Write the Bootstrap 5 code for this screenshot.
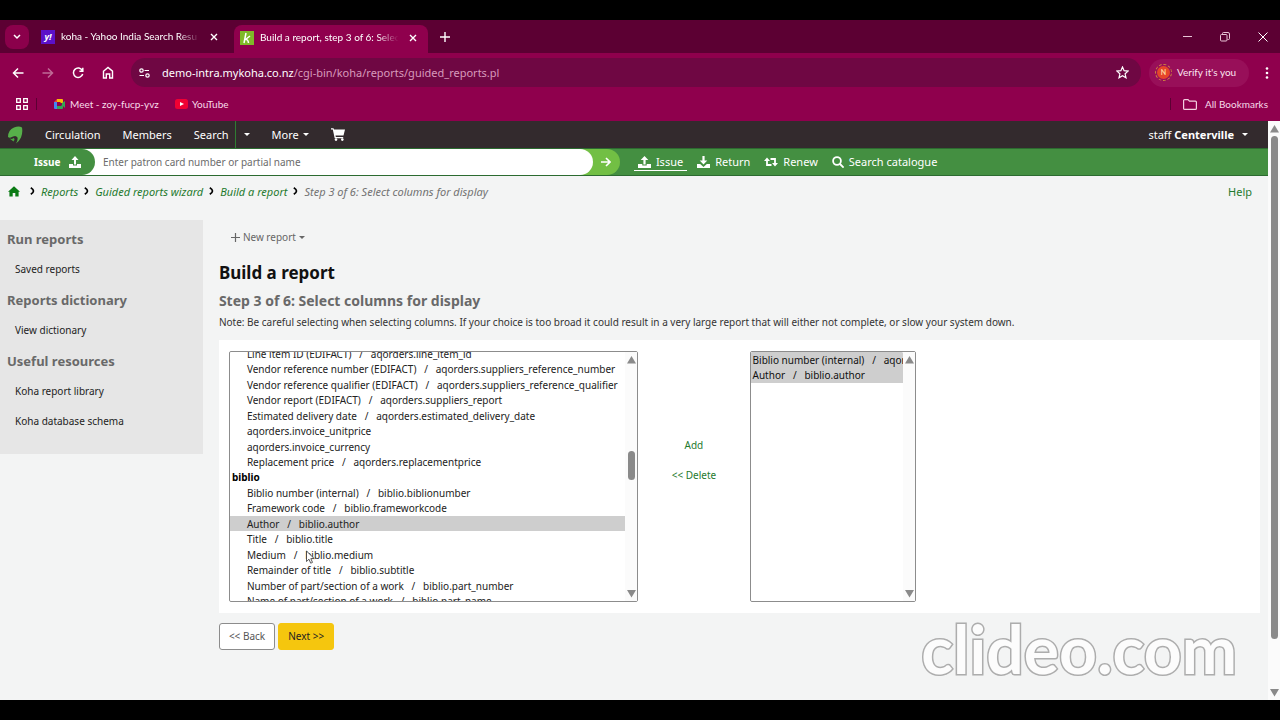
<!DOCTYPE html>
<html lang="en">
<head>
<meta charset="utf-8">
<meta name="viewport" content="width=device-width, initial-scale=1">
<title>Build a report, step 3 of 6: Select columns for display</title>
<link rel="stylesheet" href="https://cdn.jsdelivr.net/npm/bootstrap@5.3.0/dist/css/bootstrap.min.css">
<style>
body{background:#000;font-family:"Noto Sans",sans-serif;font-size:10px;line-height:15px;color:#333;min-height:100vh;padding:20px 0}
a{color:inherit;text-decoration:none}
svg{display:block;flex:none}
button{border:0;background:none;color:inherit;padding:0}

/* browser frame */
.frame-ui{font-family:Lato,sans-serif;color:#f7dcea}
.tabstrip{background:#5c0033;height:33px}
.tab-menu{width:24px;height:24px;border-radius:8px;background:#8b004b;display:grid;place-items:center;margin-left:5px}
.tab-item{height:33px;gap:6px}
.tab-item .tab-name{width:143px;overflow:hidden;white-space:nowrap;color:#fff;-webkit-mask-image:linear-gradient(90deg,#000 82%,transparent 97%)}
.tab-on{background:#8f004d;border-radius:8px 8px 0 0;width:194px;height:28px;padding:0 8px 3px 6px}
.favi{width:14px;height:14px;display:grid;place-items:center;color:#fff;font:italic 700 9px/14px "Open Sans",sans-serif}
.favi.yahoo{background:#5b11c9}
.favi.koha{background:#7fb928}
.toolbar-row{background:#8f004d;height:38px;padding:1px 11px 0 12px}
.nav-tools{gap:18px}
.omni{background:#6f0743;border-radius:14px;height:29px;margin-left:17px;color:#d79abb;font:11px/15px "Noto Sans",sans-serif}
.omni b{font-weight:400;color:#fff}
.chip{background:#980f59;border-radius:14px;height:28px;width:100px;gap:7px;color:#fbe6f0}
.chip i{width:13px;height:13px;border-radius:50%;background:#e5452a;outline:1px dashed #d08a3c;outline-offset:1px;font:700 7px/13px Lato,sans-serif;text-align:center;color:#ffd9a0}
.bookmarks{background:#8f004d;height:30px;padding-bottom:4px}
.rule-v{width:1px;height:12px;background:#5c0033}

/* staff client header */
.koha-bar{background:#332a2d;height:27px;color:#fff;font-size:11px}
.koha-bar .menu-link{margin-left:22px}
.koha-bar .split{border-left:1px solid #2f7d32;height:27px;margin-left:6px}
.tri{width:0;height:0;border:3px solid transparent;border-top-color:currentColor;border-bottom:0}
.search-bar{background:#448f41;height:28px;border:1px solid #2c6b30;border-width:1px 0;color:#fff;font-size:11px}
.issue-cap{position:relative;z-index:1;width:95px;height:26px;padding-left:34px;gap:9px;font-size:10px;font-weight:700;background:#448f41;border-radius:0 13px 13px 0}
.search-field{flex:0 0 42.5%;margin-left:-14px;background:#72bf44;border-radius:0 13px 13px 0;height:26px}
.search-bar input{border:0;border-radius:0 13px 13px 0;width:100%;height:26px;padding:0 8px 0 22px;font-size:10px;background:#fff;outline:0}
.search-bar input::placeholder{color:#6b6b6b;opacity:1}
.search-bar .go{width:27px;display:grid;place-items:center}
.acts{gap:6px;margin-left:14px}
.act{height:18px;padding:0 4px;gap:5px;border-bottom:1px solid transparent}
.act.on{border-color:#fff}

/* page */
.page-bg{background:#f3f4f4}
.crumbs{font-style:italic;font-size:11px;color:#727272;height:30px;gap:6px;padding-left:8px}
.crumbs a,.grn{color:#1f7a2e}
.side{width:16%;background:#e6e6e6;padding:11px 7px 25px}
.side h2{font-size:13px;line-height:17px;font-weight:700;color:#696969;margin:0}
.side a{display:block;color:#222;padding:0 8px;margin:14px 0 15px}
.side a+a,.side a:last-child{margin:13px 0 0}
.main-col{padding:10px 8px 0 16px}
.new-btn{gap:3px;color:#666}
.main-col h1{font-size:17px;line-height:20px;font-weight:700;color:#111;margin:18px 0 10px}
.main-col h3{font-size:14px;line-height:16px;font-weight:700;color:#696969;margin:0 0 6px}
.main-col p{margin:0 0 10px}
.panel{background:#fff;padding:11px 10px;display:grid;grid-template-columns:81fr 22fr 33fr 66fr}
.listbox{border:1px solid #8c8c8c;border-radius:2px;display:flex;position:relative;min-width:0}
.listbox select{flex:1 1 0;min-width:0;border:0;padding:0;height:249px;background:#fff;font-size:10px;outline:0;scrollbar-width:none;color:#222}
.listbox select::-webkit-scrollbar{display:none}
.listbox option{padding:1px 2px 0}
.listbox option:nth-child(even){padding-bottom:1px}
.listbox optgroup{padding:0;font-weight:700;color:#000}
.listbox optgroup option{padding-left:17px;font-weight:400;color:#222}
.listbox option:checked{background:#cecece linear-gradient(#cecece,#cecece)}
.swap{gap:15px;padding-bottom:32px}
.sbar{flex:none;width:12px;background:#fbfbfb;display:flex;flex-direction:column;align-items:center;padding:4px 0 3px}
.sbar .thumb{width:7px;border-radius:4px;background:#8a8a8a}
.thumb.in-list{height:29px;margin-top:87px}
.thumb.in-page{height:88%;margin-top:3px}
.pointer{position:absolute;left:75px;top:198px}
.foot-row{gap:3px;padding-top:10px}
.foot-btn{height:27px;padding:0 9px;border-radius:3px;border:1px solid #8c8c8c;background:#fff;color:#555}
.foot-btn.go-next{background:#f5c60e;border-color:#f5c60e;color:#222}
.stamp{position:absolute;right:31px;bottom:11px;font:700 66px/80px Lato,sans-serif;color:#fcfcfc;-webkit-text-stroke:3px #adadad;paint-order:stroke fill}
</style>
</head>
<body class="d-flex flex-column">

<header class="frame-ui">
  <div class="tabstrip d-flex align-items-center">
    <button class="tab-menu" aria-label="Search tabs"><svg width="8" height="6" fill="none" stroke="#fff" stroke-width="1.5"><path d="M1 1l3 3 3-3"/></svg></button>
    <div class="tab-item d-flex align-items-center ms-2 ps-1">
      <span class="favi yahoo">y!</span><span class="tab-name">koha - Yahoo India Search Resu</span>
      <button aria-label="Close tab"><svg width="8" height="8" stroke="#fff" stroke-width="1.4"><path d="M1 1l6 6M7 1l-6 6"/></svg></button>
    </div>
    <div class="tab-on tab-item d-flex align-items-center align-self-end ms-3">
      <span class="favi koha"><svg width="14" height="14" fill="none" stroke="#fff" stroke-width="1.5"><path d="M6 2L4 12M10 5L5.500 8.500Q8 8 8.500 12"/></svg></span><span class="tab-name">Build a report, step 3 of 6: Selec</span>
      <button aria-label="Close tab"><svg width="8" height="8" stroke="#fff" stroke-width="1.4"><path d="M1 1l6 6M7 1l-6 6"/></svg></button>
    </div>
    <button class="ms-2 ps-1" aria-label="New tab"><svg width="10" height="10" stroke="#fff" stroke-width="1.4"><path d="M5 0v10M0 5h10"/></svg></button>
    <div class="ms-auto d-flex align-items-center gap-4 pe-2 me-1">
      <button class="pe-1" aria-label="Minimise"><svg width="9" height="9" stroke="#e8c4d6"><path d="M0 4.500h9"/></svg></button>
      <button aria-label="Restore"><svg width="10" height="10" fill="none" stroke="#e8c4d6"><rect x=".5" y="2.500" width="6.500" height="6.500" rx="1"/><path d="M2.500 2.500v-1q0-1 1-1h4.500q1.500 0 1.500 1.500v4.500q0 1-1 1h-1"/></svg></button>
      <button class="ps-1" aria-label="Close"><svg width="10" height="10" stroke="#fff"><path d="M.5.5l9 9M9.500.5l-9 9"/></svg></button>
    </div>
  </div>

  <div class="toolbar-row d-flex align-items-center">
    <nav class="nav-tools d-flex align-items-center">
      <button aria-label="Back"><svg width="12" height="12" fill="none" stroke="#fff" stroke-width="1.5"><path d="M11.500 6H2M6 1.500L1.500 6 6 10.500"/></svg></button>
      <button aria-label="Forward"><svg width="12" height="12" fill="none" stroke="#c06a96" stroke-width="1.5"><path d="M.5 6H10M6 1.500L10.500 6 6 10.500"/></svg></button>
      <button aria-label="Reload"><svg width="12" height="12" fill="none" stroke="#fff" stroke-width="1.5"><path d="M10.300 3.500A4.700 4.700 0 1 0 10.700 7M10.800.8v3.400H7.400"/></svg></button>
      <button aria-label="Home"><svg width="12" height="13" fill="none" stroke="#fff" stroke-width="1.4"><path d="M1.500 5.200L6 1.500l4.500 3.700V12H7.700V8H4.300v4H1.500z"/></svg></button>
    </nav>
    <div class="omni flex-grow-1 d-flex align-items-center px-2">
      <svg width="11" height="10" fill="none" stroke="#fff" stroke-width="1.2"><circle cx="2.500" cy="2.500" r="1.700"/><path d="M5.500 2.500H10M.5 7.500H5"/><circle cx="8.500" cy="7.500" r="1.700"/></svg>
      <span class="ms-2 ps-1"><b>demo-intra.mykoha.co.nz</b>/cgi-bin/koha/reports/guided_reports.pl</span>
      <button class="ms-auto me-1" aria-label="Bookmark"><svg width="13" height="13" fill="none" stroke="#fff" stroke-width="1.2"><path d="M6.500 1l1.600 3.700 4 .4-3 2.700.9 4-3.500-2.100L3 11.800l.9-4-3-2.700 4-.4z"/></svg></button>
    </div>
    <button class="chip d-flex align-items-center ms-2 ps-2"><i>N</i>Verify it's you</button>
    <button class="ms-3" aria-label="Menu"><svg width="4" height="12" fill="#fff"><circle cx="2" cy="1.500" r="1.300"/><circle cx="2" cy="6" r="1.300"/><circle cx="2" cy="10.500" r="1.300"/></svg></button>
  </div>

  <nav class="bookmarks d-flex align-items-center">
    <button class="ms-3" aria-label="Apps"><svg width="12" height="12" fill="none" stroke="#fff" stroke-width="1.3"><path d="M.7.7h3.600v3.600H.7zM7.700.7h3.600v3.600H7.700zM.7 7.700h3.600v3.600H.7zM7.700 7.700h3.600v3.600H7.700z"/></svg></button>
    <span class="rule-v ms-2 me-2 border-start-0"></span>
    <a href="#" class="d-flex align-items-center gap-1 ms-2"><svg width="13" height="12"><path fill="#4285f4" d="M1 4h3v7H2q-1 0-1-1z"/><path fill="#ea4335" d="M1 4l3-3v3z"/><path fill="#fbbc04" d="M4 1h5q1 0 1 1v3H7V4H4z"/><path fill="#34a853" d="M4 8h4l2-2v4q0 1-1 1H4zM9 5l3-2v7L9 7z"/><path fill="#8f004d" d="M4 4h3.500v4H4z"/></svg>Meet - zoy-fucp-yvz</a>
    <a href="#" class="d-flex align-items-center gap-1 ms-3"><svg width="13" height="10"><rect width="13" height="10" rx="2.500" fill="#f00033"/><path fill="#fff" d="M5 3l4 2-4 2z"/></svg>YouTube</a>
    <span class="rule-v ms-auto me-2"></span>
    <a href="#" class="d-flex align-items-center gap-2 ms-1 pe-2 me-1"><svg width="14" height="11" fill="none" stroke="#f3cfe0" stroke-width="1.2"><path d="M.6 1.600q0-1 1-1H5l1.500 1.500h5.900q1 0 1 1v6.300q0 1-1 1H1.600q-1 0-1-1z"/></svg>All Bookmarks</a>
  </nav>
</header>

<div class="d-flex flex-grow-1 page-bg">
  <div class="flex-grow-1 position-relative overflow-hidden">
    <nav class="koha-bar d-flex align-items-center">
      <a href="#" class="ms-2" aria-label="Koha home"><svg width="15" height="18"><path fill="#57b04a" d="M0 11Q0 4 6 1.500q5-2 8 0 1 5-1 10-2 4-5 6 2-3 1.500-6-1.500-2.500-4.500-1-3 2-5 .5z"/><path fill="#4aa53f" d="M1.500 12.500q2.500 1 4-.500 2 1 0 3.500z"/></svg></a>
      <a href="#" class="menu-link">Circulation</a>
      <a href="#" class="menu-link">Members</a>
      <a href="#" class="menu-link">Search</a>
      <a href="#" class="split d-flex align-items-center ps-2" aria-label="Search options"><span class="tri"></span></a>
      <a href="#" class="menu-link d-flex align-items-center">More<span class="tri ms-1"></span></a>
      <a href="#" class="menu-link" aria-label="Cart"><svg width="14" height="13" fill="#fff"><path d="M0 .3h2.500l.5 1.300h11L12.500 7.600H4.500l.3 1.300h7.400v1.300H3.700L1.800 1.600H0z"/><circle cx="5" cy="11.600" r="1.300"/><circle cx="11.300" cy="11.600" r="1.300"/></svg></a>
      <a href="#" class="ms-auto d-flex align-items-center pe-3 me-1"><span>staff <b>Centerville</b></span><span class="tri ms-2"></span></a>
    </nav>
    <form class="search-bar d-flex align-items-center">
      <label for="patron" class="issue-cap d-flex align-items-center">Issue <svg width="12" height="12" fill="#fff"><path d="M6 0l3.500 4H7v4.500H5V4H2.500zM0 8h4v1.500h4V8h4v4H0z"/></svg></label>
      <div class="search-field d-flex">
        <div class="flex-grow-1"><input id="patron" type="text" placeholder="Enter patron card number or partial name"></div>
        <button class="go" type="button" aria-label="Submit"><svg width="10" height="10" fill="none" stroke="#fff" stroke-width="1.6"><path d="M0 5h9M5 1l4 4-4 4"/></svg></button>
      </div>
      <div class="acts d-flex align-items-center">
        <a href="#" class="act on d-flex align-items-center"><svg width="13" height="12" fill="#fff"><path d="M6.500 0l3.800 4H7.600v4.500H5.400V4H2.700zM0 8h4.300v1.500h4.400V8H13v4H0z"/></svg>Issue</a>
        <a href="#" class="act d-flex align-items-center"><svg width="13" height="12" fill="#fff"><path d="M6.500 8.500L2.700 4.500h2.700V0h2.200v4.500h2.700zM0 8h3.200l3.300 3 3.300-3H13v4H0z"/></svg>Return</a>
        <a href="#" class="act d-flex align-items-center"><svg width="14" height="10" fill="none" stroke="#fff" stroke-width="1.8"><path d="M3 2.500V8H7.500M11 7.500V2H6.500"/><path fill="#fff" stroke="none" d="M0 4L3 .5 6 4zM8 6l3 3.500L14 6z"/></svg>Renew</a>
        <a href="#" class="act d-flex align-items-center"><svg width="12" height="12" fill="none" stroke="#fff" stroke-width="1.8"><circle cx="5" cy="5" r="3.900"/><path d="M8 8l3.600 3.600"/></svg>Search catalogue</a>
      </div>
    </form>

    <nav class="crumbs d-flex align-items-center" aria-label="Breadcrumb">
      <a href="#" aria-label="Home"><svg width="12" height="11" fill="#0a7a14"><path d="M6 .3L12 5.800h-1.400V10.500H7.300V7H4.700v3.500H1.400V5.800H0z"/></svg></a>
      <svg class="ms-1" width="5" height="8" fill="none" stroke="#000" stroke-width="1.7"><path d="M.8.8Q3.500 2.500 3.500 4T.8 7.200"/></svg>
      <a href="#">Reports</a>
      <svg width="5" height="8" fill="none" stroke="#000" stroke-width="1.7"><path d="M.8.8Q3.500 2.500 3.500 4T.8 7.200"/></svg>
      <a href="#">Guided reports wizard</a>
      <svg width="5" height="8" fill="none" stroke="#000" stroke-width="1.7"><path d="M.8.8Q3.500 2.500 3.500 4T.8 7.200"/></svg>
      <a href="#">Build a report</a>
      <svg width="5" height="8" fill="none" stroke="#000" stroke-width="1.7"><path d="M.8.8Q3.500 2.500 3.500 4T.8 7.200"/></svg>
      <span>Step 3 of 6: Select columns for display</span>
      <a href="#" class="ms-auto me-3 fst-normal">Help</a>
    </nav>

    <div class="d-flex align-items-start" style="padding-top:14px">
      <aside class="side flex-shrink-0">
        <h2>Run reports</h2>
        <a href="#">Saved reports</a>
        <h2>Reports dictionary</h2>
        <a href="#">View dictionary</a>
        <h2>Useful resources</h2>
        <a href="#">Koha report library</a>
        <a href="#">Koha database schema</a>
      </aside>
      <main class="main-col flex-grow-1">
        <button class="new-btn d-flex align-items-center ms-2 ps-1"><svg width="9" height="9" stroke="#666" stroke-width="1.2"><path d="M4.500 0v9M0 4.500h9"/></svg>New report<span class="tri"></span></button>
        <h1>Build a report</h1>
        <h3>Step 3 of 6: Select columns for display</h3>
        <p>Note: Be careful selecting when selecting columns. If your choice is too broad it could result in a very large report that will either not complete, or slow your system down.</p>
        <form>
          <div class="panel">
            <div class="listbox">
              <select id="available" multiple aria-label="Available columns">
                <optgroup label="aqorders">
                  <option>Line item ID (EDIFACT)&nbsp;&nbsp; / &nbsp;&nbsp;aqorders.line_item_id</option>
                  <option>Vendor reference number (EDIFACT)&nbsp;&nbsp; / &nbsp;&nbsp;aqorders.suppliers_reference_number</option>
                  <option>Vendor reference qualifier (EDIFACT)&nbsp;&nbsp; / &nbsp;&nbsp;aqorders.suppliers_reference_qualifier</option>
                  <option>Vendor report (EDIFACT)&nbsp;&nbsp; / &nbsp;&nbsp;aqorders.suppliers_report</option>
                  <option>Estimated delivery date&nbsp;&nbsp; / &nbsp;&nbsp;aqorders.estimated_delivery_date</option>
                  <option>aqorders.invoice_unitprice</option>
                  <option>aqorders.invoice_currency</option>
                  <option>Replacement price&nbsp;&nbsp; / &nbsp;&nbsp;aqorders.replacementprice</option>
                </optgroup>
                <optgroup label="biblio">
                  <option>Biblio number (internal)&nbsp;&nbsp; / &nbsp;&nbsp;biblio.biblionumber</option>
                  <option>Framework code&nbsp;&nbsp; / &nbsp;&nbsp;biblio.frameworkcode</option>
                  <option selected>Author&nbsp;&nbsp; / &nbsp;&nbsp;biblio.author</option>
                  <option>Title&nbsp;&nbsp; / &nbsp;&nbsp;biblio.title</option>
                  <option>Medium&nbsp;&nbsp; / &nbsp;&nbsp;biblio.medium</option>
                  <option>Remainder of title&nbsp;&nbsp; / &nbsp;&nbsp;biblio.subtitle</option>
                  <option>Number of part/section of a work&nbsp;&nbsp; / &nbsp;&nbsp;biblio.part_number</option>
                  <option>Name of part/section of a work&nbsp;&nbsp; / &nbsp;&nbsp;biblio.part_name</option>
                </optgroup>
              </select>
              <div class="sbar">
                <svg width="9" height="8" fill="#8a8a8a"><path d="M4.500 0L9 7.500H0z"/></svg>
                <span class="thumb in-list"></span>
                <svg class="mt-auto" width="9" height="8" fill="#8a8a8a"><path d="M4.500 7.500L9 0H0z"/></svg>
              </div>
              <svg class="pointer" width="12" height="16" fill="#fff" stroke="#333" stroke-width=".8"><path d="M1.500 1v10.500l2.500-2.300 1.700 4 1.800-.8-1.700-3.800h3.400z"/></svg>
            </div>
            <div class="swap grn d-flex flex-column align-items-center justify-content-center">
              <button type="button">Add</button>
              <button type="button">&lt;&lt; Delete</button>
            </div>
            <div class="listbox">
              <select multiple aria-label="Selected columns">
                <option selected>Biblio number (internal)&nbsp;&nbsp; / &nbsp;&nbsp;aqorders.biblionumber</option>
                <option selected>Author&nbsp;&nbsp; / &nbsp;&nbsp;biblio.author</option>
              </select>
              <div class="sbar">
                <svg width="9" height="8" fill="#8a8a8a"><path d="M4.500 0L9 7.500H0z"/></svg>
                <svg class="mt-auto" width="9" height="8" fill="#8a8a8a"><path d="M4.500 7.500L9 0H0z"/></svg>
              </div>
            </div>
          </div>
          <div class="foot-row d-flex">
            <button type="button" class="foot-btn">&lt;&lt; Back</button>
            <button type="button" class="foot-btn go-next">Next &gt;&gt;</button>
          </div>
        </form>
      </main>
    </div>
    <div class="stamp">clideo.com</div>
  </div>
  <div class="sbar">
    <svg width="9" height="8" fill="#8a8a8a"><path d="M4.500 0L9 7.500H0z"/></svg>
    <span class="thumb in-page"></span>
    <svg class="mt-auto" width="9" height="8" fill="#8a8a8a"><path d="M4.500 7.500L9 0H0z"/></svg>
  </div>
</div>

<script src="https://cdn.jsdelivr.net/npm/bootstrap@5.3.0/dist/js/bootstrap.bundle.min.js"></script>
<script>
addEventListener('load', () => requestAnimationFrame(() => { document.getElementById('available').scrollTop = 21; }));
</script>
</body>
</html>
